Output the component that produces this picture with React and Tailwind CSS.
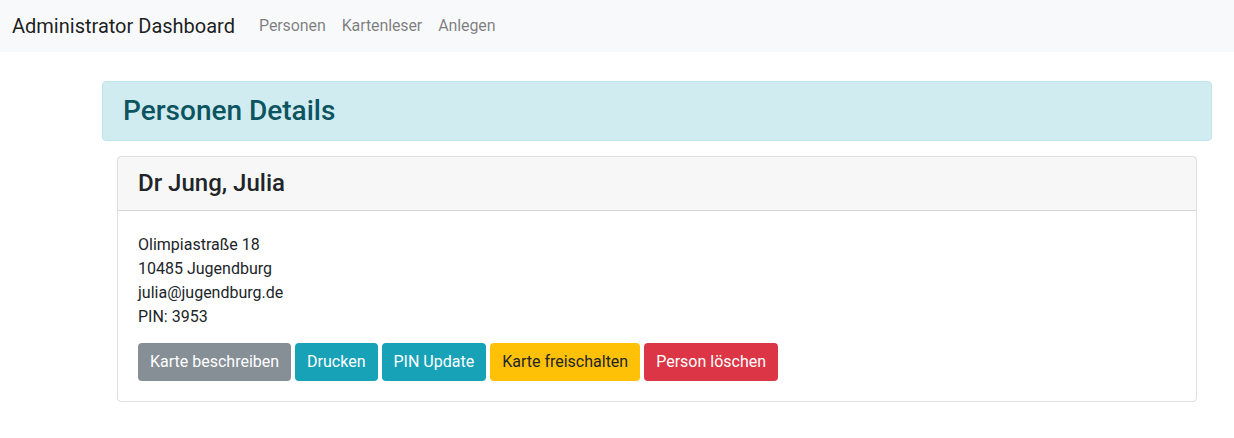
import React from "react";

const buttons = [
  { label: "Karte beschreiben", cls: "bg-[#868e96] text-white" },
  { label: "Drucken", cls: "bg-[#17a2b8] text-white" },
  { label: "PIN Update", cls: "bg-[#17a2b8] text-white" },
  { label: "Karte freischalten", cls: "bg-[#ffc107] text-[#212529]" },
  { label: "Person löschen", cls: "bg-[#dc3545] text-white" },
];

const App = () => {
  return (
    <div className="min-h-screen bg-white text-[#212529] font-['Roboto',sans-serif] text-base leading-6">
      {/* Navbar */}
      <nav className="h-[52px] bg-[#f8f9fa] flex items-center px-3">
        <span className="text-[20px] leading-[30px] text-black/90 mr-4">
          Administrator Dashboard
        </span>
        <a className="px-2 text-black/50 tracking-[-0.1px]">Personen</a>
        <a className="px-2 text-black/50 tracking-[-0.1px]">Kartenleser</a>
        <a className="px-2 text-black/50 tracking-[-0.1px]">Anlegen</a>
      </nav>

      <div className="ml-[102px] w-[1110px] mt-[29px]">
        {/* Header alert */}
        <div className="bg-[#d1ecf1] border border-[#bee5eb] rounded px-5 py-3 text-[#0c5460]">
          <h3 className="text-[28px] leading-[33.6px] font-medium">
            Personen Details
          </h3>
        </div>

        {/* Person card */}
        <div className="mx-[15px] mt-[15px] border border-black/[0.125] rounded">
          <div className="h-[54px] flex items-center bg-black/[0.03] border-b border-black/[0.125] px-5">
            <h4 className="text-[24px] leading-[28.8px] font-medium">
              Dr Jung, Julia
            </h4>
          </div>
          <div className="px-5 pt-[22px] pb-5">
            <p className="mb-[14px]">
              Olimpiastraße 18
              <br />
              10485 Jugendburg
              <br />
              julia@jugendburg.de
              <br />
              PIN: 3953
            </p>
            <div className="flex gap-1">
              {buttons.map((b) => (
                <button
                  key={b.label}
                  className={`h-[38px] px-3 rounded text-base ${b.cls}`}
                >
                  {b.label}
                </button>
              ))}
            </div>
          </div>
        </div>
      </div>
    </div>
  );
};

export default App;
